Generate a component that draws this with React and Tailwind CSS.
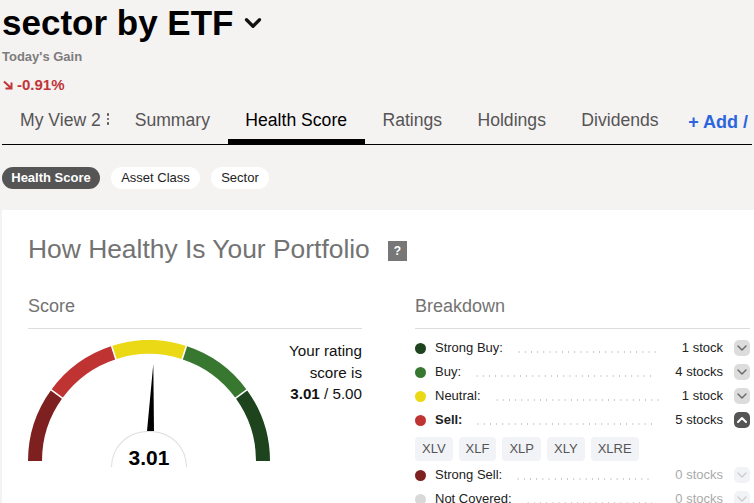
import { ChevronDown, ChevronUp } from "lucide-react";

const tabs = ["Summary", "Health Score", "Ratings", "Holdings", "Dividends"];

const topRows = [
  { label: "Strong Buy:", value: "1 stock", color: "bg-[#1d441c]" },
  { label: "Buy:", value: "4 stocks", color: "bg-[#37772f]" },
  { label: "Neutral:", value: "1 stock", color: "bg-[#ecd916]" },
  { label: "Sell:", value: "5 stocks", color: "bg-[#c03333]", open: true },
];

const bottomRows = [
  { label: "Strong Sell:", value: "0 stocks", color: "bg-[#7e2020]", empty: true },
  { label: "Not Covered:", value: "0 stocks", color: "bg-[#d9d9d9]", empty: true },
];

const tickers = ["XLV", "XLF", "XLP", "XLY", "XLRE"];

const BreakdownRow = ({ row }) => (
  <div className="flex h-6 items-center text-[13px] text-[#222]">
    <span className={`mr-[9px] h-[11px] w-[11px] shrink-0 rounded-full ${row.color}`} />
    <span className={`whitespace-nowrap ${row.open ? "font-bold" : ""}`}>{row.label}</span>
    <span className="mt-[8px] mr-[23px] ml-[13px] h-[2px] flex-1 bg-[radial-gradient(circle,#c4c4c4_0.7px,transparent_1px)] bg-[length:6.2px_2px] bg-repeat-x" />
    <span className={`whitespace-nowrap ${row.empty ? "text-[#aaa]" : ""}`}>{row.value}</span>
    <span
      className={`ml-[11px] flex h-4 w-4 shrink-0 items-center justify-center rounded-[5px] ${
        row.open
          ? "bg-[#555] text-white"
          : row.empty
            ? "bg-[#f1f3f7] text-[#ccc]"
            : "bg-[#dcdcdc] text-[#666]"
      }`}
    >
      {row.open ? (
        <ChevronUp size={20} strokeWidth={3} />
      ) : (
        <ChevronDown size={20} strokeWidth={2} />
      )}
    </span>
  </div>
);

const Gauge = () => {
  const cx = 121;
  const cy = 121;
  const point = (radius, degrees) => {
    const a = (degrees * Math.PI) / 180;
    return `${cx - radius * Math.cos(a)} ${cy - radius * Math.sin(a)}`;
  };
  const segment = (from, to) =>
    `M${point(121, from)} A121 121 0 0 1 ${point(121, to)} L${point(107, to)} A107 107 0 0 0 ${point(107, from)} Z`;

  return (
    <div className="relative h-[140px] w-[242px] shrink-0">
      <svg width="242" height="122" viewBox="0 0 242 122" className="block">
        <path d={segment(0, 36)} fill="#7e2020" />
        <path d={segment(36, 72)} fill="#c03333" />
        <path d={segment(72, 108)} fill="#ecd916" />
        <path d={segment(108, 144)} fill="#37772f" />
        <path d={segment(144, 180)} fill="#1d441c" />
        {[36, 72, 108, 144].map((angle) => (
          <line
            key={angle}
            x1={cx - 105 * Math.cos((angle * Math.PI) / 180)}
            y1={cy - 105 * Math.sin((angle * Math.PI) / 180)}
            x2={cx - 123 * Math.cos((angle * Math.PI) / 180)}
            y2={cy - 123 * Math.sin((angle * Math.PI) / 180)}
            stroke="#fff"
            strokeWidth="1.6"
          />
        ))}
        <polygon points="125.3,24 119,91 126,91" fill="#000" />
      </svg>
      <div className="absolute left-[83px] top-[91px] flex h-[36px] w-[76px] justify-center rounded-t-[38px] border border-b-0 border-[#ddd] bg-white">
        <span className="mt-[17px] text-[21px] leading-[18px] font-bold text-black">3.01</span>
      </div>
    </div>
  );
};

const App = () => {
  return (
    <div className="h-[503px] w-[754px] overflow-hidden bg-[#f5f2f2] font-['Liberation_Sans',Arial,sans-serif]">
      <div className="flex h-[44px] items-center pl-[2px] pt-[1px]">
        <h1 className="text-[35px] leading-[42px] font-bold whitespace-nowrap text-black">sector by ETF</h1>
        <ChevronDown size={26} strokeWidth={3} className="mt-[1px] ml-[7px] text-[#111]" />
      </div>
      <div className="mt-[6px] pl-[2px] text-[13px] leading-[14px] font-bold text-[#7d7d7d]">Today's Gain</div>
      <div className="mt-[13px] flex items-center pl-[3px] text-[15px] leading-[16px] font-bold text-[#c0353a]">
        <svg width="10" height="10" viewBox="0 0 10 10" className="mr-[4px]" fill="none" stroke="currentColor" strokeWidth="2">
          <path d="M1 1.5 L8.5 8.5 M8.5 2.5 V8.5 H2.5" />
        </svg>
        -0.91%
      </div>

      <div className="mx-[2px] mt-[2px] flex h-[50px] items-end overflow-hidden border-b border-black text-[17.6px] text-[#555]">
        <div className="flex h-[38px] w-[115px] shrink-0 items-start justify-start pt-[1px] pl-[18px] whitespace-nowrap">
          My View 2
          <span className="mt-[6px] ml-[6px] flex flex-col gap-[2px]">
            <span className="h-[2.5px] w-[2.5px] rounded-full bg-[#555]" />
            <span className="h-[2.5px] w-[2.5px] rounded-full bg-[#555]" />
            <span className="h-[2.5px] w-[2.5px] rounded-full bg-[#555]" />
          </span>
        </div>
        {tabs.map((tab) => (
          <div
            key={tab}
            className={`h-[38px] shrink-0 px-[17.7px] pt-[1px] whitespace-nowrap ${
              tab === "Health Score" ? "border-b-[5px] border-black text-black" : ""
            }`}
          >
            {tab}
          </div>
        ))}
        <div className="mb-[3px] ml-[12px] h-[35px] shrink-0 pt-[3px] text-[18px] font-bold whitespace-nowrap text-[#2b66dd]">+ Add /</div>
      </div>

      <div className="mt-[22px] flex gap-[11px] pl-[2px] text-[13px]">
        <div className="flex h-[22px] w-[98px] items-center justify-center rounded-full bg-[#555] font-bold text-white">Health Score</div>
        <div className="flex h-[22px] w-[89px] items-center justify-center rounded-full bg-white text-[#222]">Asset Class</div>
        <div className="flex h-[22px] w-[58px] items-center justify-center rounded-full bg-white text-[#222]">Sector</div>
      </div>

      <div className="mt-[21px] ml-[2px] h-[293px] bg-white pt-[24px] pr-[4px] pl-[26px]">
        <div className="flex items-center">
          <h2 className="text-[26.4px] leading-[30px] whitespace-nowrap text-[#737373]">How Healthy Is Your Portfolio</h2>
          <span className="mt-[4px] ml-[18px] flex h-[20px] w-[19px] items-center justify-center bg-[#777] text-[12px] font-bold text-white">?</span>
        </div>

        <div className="mt-[29px] flex gap-[53px]">
          <div className="w-[334px] shrink-0">
            <div className="h-[36px] border-b border-[#ddd] text-[18px] leading-[26px] text-[#737373]">Score</div>
            <div className="mt-[11px] flex justify-between">
              <Gauge />
              <div className="text-right text-[15.2px] leading-[21.5px] text-[#111]">
                <div>Your rating</div>
                <div>score is</div>
                <div><span className="font-bold">3.01</span> / 5.00</div>
              </div>
            </div>
          </div>

          <div className="min-w-0 flex-1">
            <div className="h-[36px] border-b border-[#ddd] text-[18px] leading-[26px] text-[#737373]">Breakdown</div>
            <div className="mt-[7px]">
              {topRows.map((row) => (
                <BreakdownRow key={row.label} row={row} />
              ))}
              <div className="mt-[5px] mb-[2px] flex gap-[6px]">
                {tickers.map((ticker) => (
                  <span key={ticker} className="flex h-6 items-center rounded bg-[#f1f3f7] px-[7px] text-[13px] text-[#555]">
                    {ticker}
                  </span>
                ))}
              </div>
              {bottomRows.map((row) => (
                <BreakdownRow key={row.label} row={row} />
              ))}
            </div>
          </div>
        </div>
      </div>
    </div>
  );
};

export default App;
